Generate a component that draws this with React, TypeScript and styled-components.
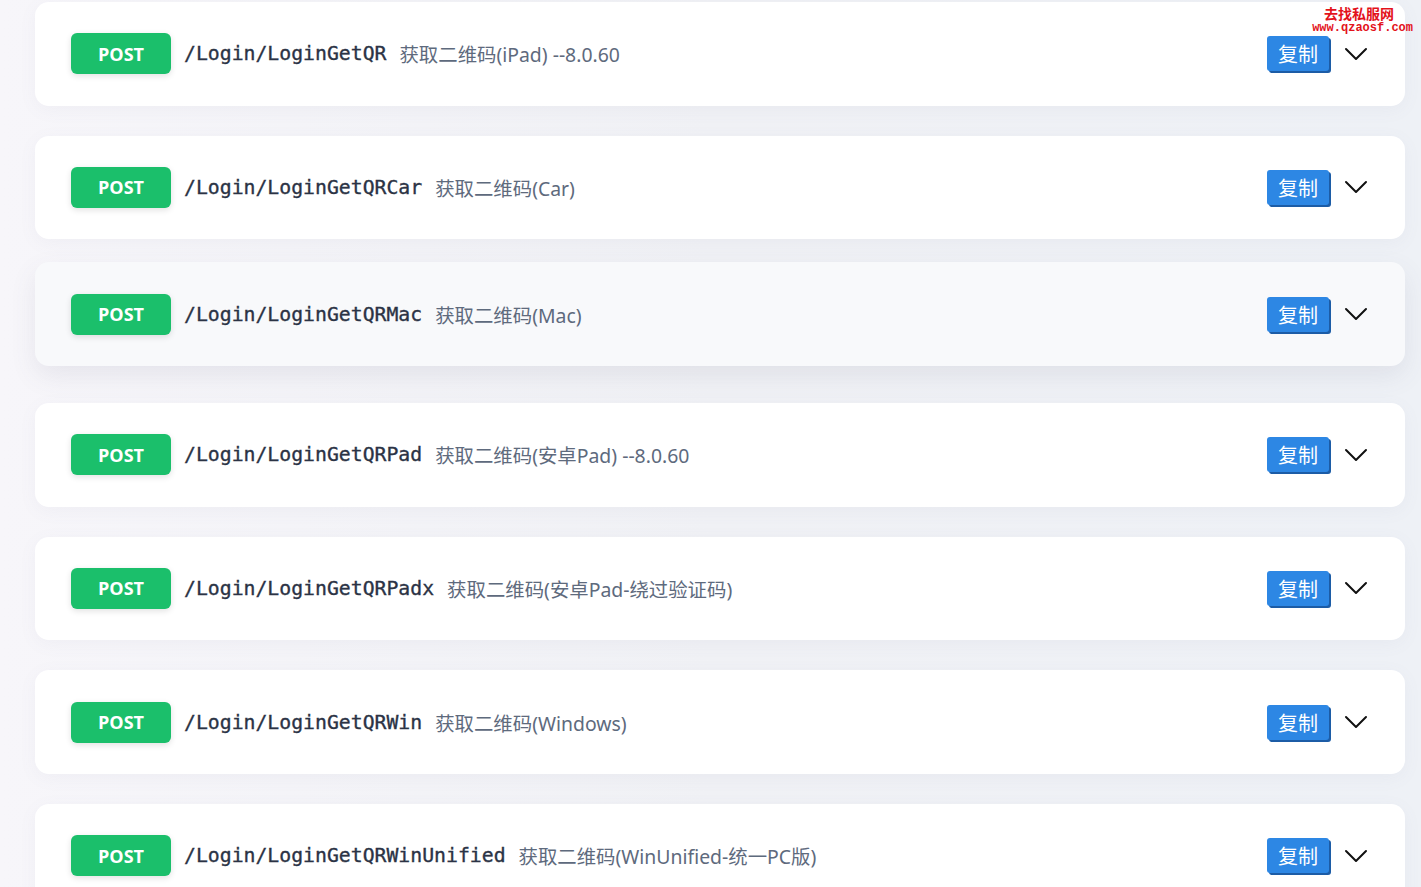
import React from 'react';
import styled, { createGlobalStyle } from 'styled-components';

// ------------------------------------------------------------------------------------------------

type ApiItem = {
  method: string;
  path: string;
  desc: string;
};

const apis: ApiItem[] = [
  { method: 'POST', path: '/Login/LoginGetQR', desc: '获取二维码(iPad) --8.0.60' },
  { method: 'POST', path: '/Login/LoginGetQRCar', desc: '获取二维码(Car)' },
  { method: 'POST', path: '/Login/LoginGetQRMac', desc: '获取二维码(Mac)' },
  { method: 'POST', path: '/Login/LoginGetQRPad', desc: '获取二维码(安卓Pad) --8.0.60' },
  { method: 'POST', path: '/Login/LoginGetQRPadx', desc: '获取二维码(安卓Pad-绕过验证码)' },
  { method: 'POST', path: '/Login/LoginGetQRWin', desc: '获取二维码(Windows)' },
  { method: 'POST', path: '/Login/LoginGetQRWinUnified', desc: '获取二维码(WinUnified-统一PC版)' },
];

const ChevronDown = () => (
  <svg width="24" height="14" viewBox="0 0 24 14" fill="none">
    <path d="M2 2 L12 12 L22 2" stroke="#111" strokeWidth="2" strokeLinecap="round" strokeLinejoin="round" />
  </svg>
);

export default function App() {
  // the third row is shown in its hover state
  const hovered = 2;

  return (
    <>
      <GlobalStyle />
      <Page>
        <List>
          {apis.map((api, index) => (
            <Card key={api.path} data-hover={index === hovered ? 'true' : 'false'}>
              <Method>{api.method}</Method>
              <Path>{api.path}</Path>
              <Desc>{api.desc}</Desc>
              <Actions>
                <CopyButton>复制</CopyButton>
                <Toggle>
                  <ChevronDown />
                </Toggle>
              </Actions>
            </Card>
          ))}
        </List>
        <Watermark>
          <WatermarkTitle>去找私服网</WatermarkTitle>
          <WatermarkUrl>www.qzaosf.com</WatermarkUrl>
        </Watermark>
      </Page>
    </>
  );
}

// ------------------------------------------------------------------------------------------------

const GlobalStyle = createGlobalStyle`
  html, body {
    margin: 0;
    padding: 0;
    height: 100%;
    overflow: hidden;
  }
  body {
    font-family: "Noto Sans", "Noto Sans CJK SC", sans-serif;
    background: linear-gradient(90deg, #f7f6fa 0%, #f0f1f5 50%, #eef1f6 100%);
  }
`;

const Page = styled.div`
  position: relative;
  min-height: 887px;
  padding: 2px 16px 0 35px;
  box-sizing: border-box;
`;

const List = styled.div`
  display: flex;
  flex-direction: column;
  gap: 30px;
`;

const Card = styled.div`
  display: flex;
  align-items: center;
  height: 103.67px;
  box-sizing: border-box;
  padding: 0 37px 0 36px;
  background: #ffffff;
  border-radius: 14px;
  box-shadow: 0 4px 18px rgba(120, 120, 150, 0.06);

  &[data-hover='true'] {
    background: #f8f9fb;
    transform: translateY(-7px);
    box-shadow: 0 10px 26px rgba(90, 90, 120, 0.1);
  }
`;

const Method = styled.div`
  flex: none;
  width: 100px;
  height: 41px;
  display: flex;
  align-items: center;
  justify-content: center;
  background: #1bbf6b;
  color: #ffffff;
  border-radius: 6px;
  font-family: "Open Sans", sans-serif;
  font-weight: 700;
  font-size: 18px;
  box-shadow: 0 2px 6px rgba(0, 0, 0, 0.12);
`;

const Path = styled.span`
  margin-left: 13px;
  font-family: "DejaVu Sans Mono", monospace;
  font-size: 19.8px;
  color: #2b3345;
  -webkit-text-stroke: 0.35px #2b3345;
  white-space: nowrap;
`;

const Desc = styled.span`
  margin-left: 13px;
  font-family: "Noto Sans", "Noto Sans CJK SC", sans-serif;
  font-size: 19.4px;
  color: #5e6a7d;
  white-space: nowrap;
`;

const Actions = styled.div`
  margin-left: auto;
  display: flex;
  align-items: center;
  gap: 15px;
`;

const CopyButton = styled.button`
  width: 62px;
  height: 35px;
  padding: 0;
  border: none;
  border-radius: 3px;
  background: #2d87e4;
  color: #ffffff;
  font-family: "Noto Sans CJK SC", sans-serif;
  font-size: 20px;
  line-height: 35px;
  box-shadow: 2px 2px 0 #1c5ca6;
  cursor: pointer;
`;

const Toggle = styled.div`
  width: 24px;
  height: 24px;
  display: flex;
  align-items: center;
  justify-content: center;
`;

const Watermark = styled.div`
  position: absolute;
  top: 6px;
  right: 8px;
  display: flex;
  flex-direction: column;
  align-items: flex-end;
  color: #e3121b;
  line-height: 1;
  pointer-events: none;
`;

const WatermarkTitle = styled.div`
  margin-right: 19px;
  font-family: "Noto Sans CJK SC", serif;
  font-weight: 700;
  font-size: 14px;
`;

const WatermarkUrl = styled.div`
  margin-top: 2px;
  font-family: "Liberation Mono", monospace;
  font-weight: 700;
  font-size: 12px;
`;
